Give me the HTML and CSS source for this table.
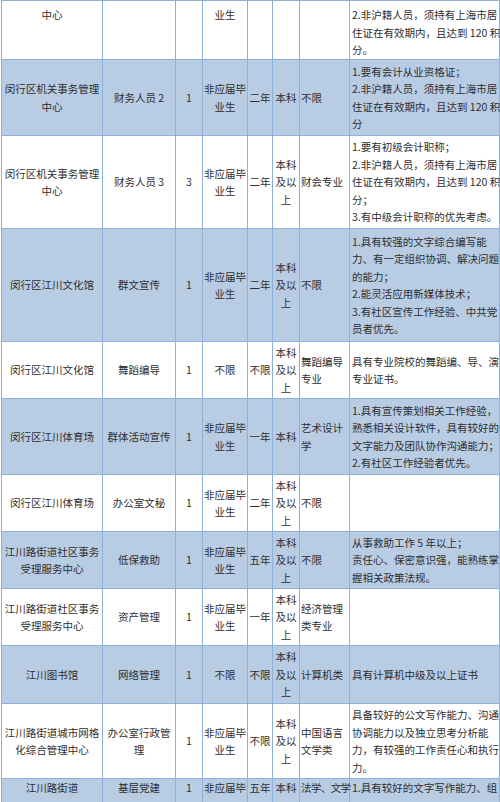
FILE: index.html
```html
<!DOCTYPE html>
<html lang="zh">
<head>
<meta charset="utf-8">
<link rel="stylesheet" href="styles.css">
</head>
<body>
<div class="wrap">
<table class="jobs">
<colgroup>
<col class="c1"><col class="c2"><col class="c3"><col class="c4"><col class="c5"><col class="c6"><col class="c7"><col class="c8">
</colgroup>
<tbody>
<tr class="r0 top">
<td>中心</td><td></td><td></td><td>业生</td><td></td><td></td><td class="l"></td>
<td class="req">2.非沪籍人员，须持有上海市居<br>住证在有效期内，且达到 120 积<br>分。</td>
</tr>
<tr class="r1 blue">
<td>闵行区机关事务管理<br>中心</td><td>财务人员 2</td><td>1</td><td>非应届毕<br>业生</td><td>二年</td><td>本科</td><td class="l">不限</td>
<td class="req">1.要有会计从业资格证；<br>2.非沪籍人员，须持有上海市居<br>住证在有效期内，且达到 120 积<br>分</td>
</tr>
<tr class="r2">
<td>闵行区机关事务管理<br>中心</td><td>财务人员 3</td><td>3</td><td>非应届毕<br>业生</td><td>二年</td><td>本科<br>及以<br>上</td><td class="l">财会专业</td>
<td class="req">1.要有初级会计职称；<br>2.非沪籍人员，须持有上海市居<br>住证在有效期内，且达到 120 积<br>分；<br>3.有中级会计职称的优先考虑。</td>
</tr>
<tr class="r3 blue">
<td>闵行区江川文化馆</td><td>群文宣传</td><td>1</td><td>非应届毕<br>业生</td><td>二年</td><td>本科<br>及以<br>上</td><td class="l">不限</td>
<td class="req">1.具有较强的文字综合编写能<br>力、有一定组织协调、解决问题<br>的能力；<br>2.能灵活应用新媒体技术；<br>3.有社区宣传工作经验、中共党<br>员者优先。</td>
</tr>
<tr class="r4">
<td>闵行区江川文化馆</td><td>舞蹈编导</td><td>1</td><td>不限</td><td>不限</td><td>本科<br>及以<br>上</td><td class="l">舞蹈编导<br>专业</td>
<td class="req">具有专业院校的舞蹈编、导、演<br>专业证书。</td>
</tr>
<tr class="r5 blue">
<td>闵行区江川体育场</td><td>群体活动宣传</td><td>1</td><td>非应届毕<br>业生</td><td>一年</td><td>本科</td><td class="l">艺术设计<br>学</td>
<td class="req">1.具有宣传策划相关工作经验，<br>熟悉相关设计软件，具有较好的<br>文字能力及团队协作沟通能力；<br>2.有社区工作经验者优先。</td>
</tr>
<tr class="r6">
<td>闵行区江川体育场</td><td>办公室文秘</td><td>1</td><td>非应届毕<br>业生</td><td>二年</td><td>本科<br>及以<br>上</td><td class="l">不限</td>
<td class="req"></td>
</tr>
<tr class="r7 blue">
<td>江川路街道社区事务<br>受理服务中心</td><td>低保救助</td><td>1</td><td>非应届毕<br>业生</td><td>五年</td><td>本科<br>及以<br>上</td><td class="l">不限</td>
<td class="req">从事救助工作 5 年以上；<br>责任心、保密意识强，能熟练掌<br>握相关政策法规。</td>
</tr>
<tr class="r8">
<td>江川路街道社区事务<br>受理服务中心</td><td>资产管理</td><td>1</td><td>非应届毕<br>业生</td><td>一年</td><td>本科<br>及以<br>上</td><td class="l">经济管理<br>类专业</td>
<td class="req"></td>
</tr>
<tr class="r9 blue">
<td>江川图书馆</td><td>网络管理</td><td>1</td><td>不限</td><td>不限</td><td>本科<br>及以<br>上</td><td class="l">计算机类</td>
<td class="req">具有计算机中级及以上证书</td>
</tr>
<tr class="r10">
<td>江川路街道城市网格<br>化综合管理中心</td><td>办公室行政管<br>理</td><td>1</td><td>非应届毕<br>业生</td><td>不限</td><td>本科<br>及以<br>上</td><td class="l">中国语言<br>文学类</td>
<td class="req">具备较好的公文写作能力、沟通<br>协调能力以及独立思考分析能<br>力，有较强的工作责任心和执行<br>力。</td>
</tr>
<tr class="r11 blue top">
<td>江川路街道</td><td>基层党建</td><td>1</td><td>非应届毕</td><td>五年</td><td>本科</td><td class="l tight">法学、文学</td>
<td class="req">1.具有较好的文字写作能力、组</td>
</tr>
</tbody>
</table>
</div>
</body>
</html>
```
FILE: styles.css
```css
html, body {
  margin: 0;
  padding: 0;
  background: #ffffff;
  overflow: hidden;
}
.wrap {
  width: 500px;
  height: 802px;
  overflow: hidden;
  padding-left: 1px;
  box-sizing: border-box;
}
.jobs {
  border-collapse: collapse;
  table-layout: fixed;
  width: 498px;
  font-family: "Noto Sans CJK SC", "Noto Sans", sans-serif;
  font-size: 10.5px;
  line-height: 17.5px;
  color: #2e2e2e;
}
.c1 { width: 101px; }
.c2 { width: 73px; }
.c3 { width: 27px; }
.c4 { width: 45px; }
.c5 { width: 25px; }
.c6 { width: 27px; }
.c7 { width: 50px; }
.c8 { width: 150px; }
.jobs td {
  border: 1px solid #8eb1dc;
  padding: 0;
  text-align: center;
  vertical-align: middle;
  white-space: nowrap;
  overflow: visible;
}
.jobs td.l {
  text-align: left;
  padding-left: 1px;
}
.jobs td.req {
  text-align: left;
  padding-left: 2px;
}
.jobs td.tight {
  letter-spacing: -0.6px;
}
.blue td {
  background: #b8cce4;
}
.top td {
  vertical-align: top;
  padding-top: 5px;
}
.r11 td {
  padding-top: 0;
}
.r0 { height: 59px; }
.r1 { height: 76px; }
.r2 { height: 93px; }
.r3 { height: 113px; }
.r4 { height: 57px; }
.r5 { height: 76px; }
.r6 { height: 57px; }
.r7 { height: 57px; }
.r8 { height: 57px; }
.r9 { height: 58px; }
.r10 { height: 75px; }
.r11 { height: 40px; }
```
